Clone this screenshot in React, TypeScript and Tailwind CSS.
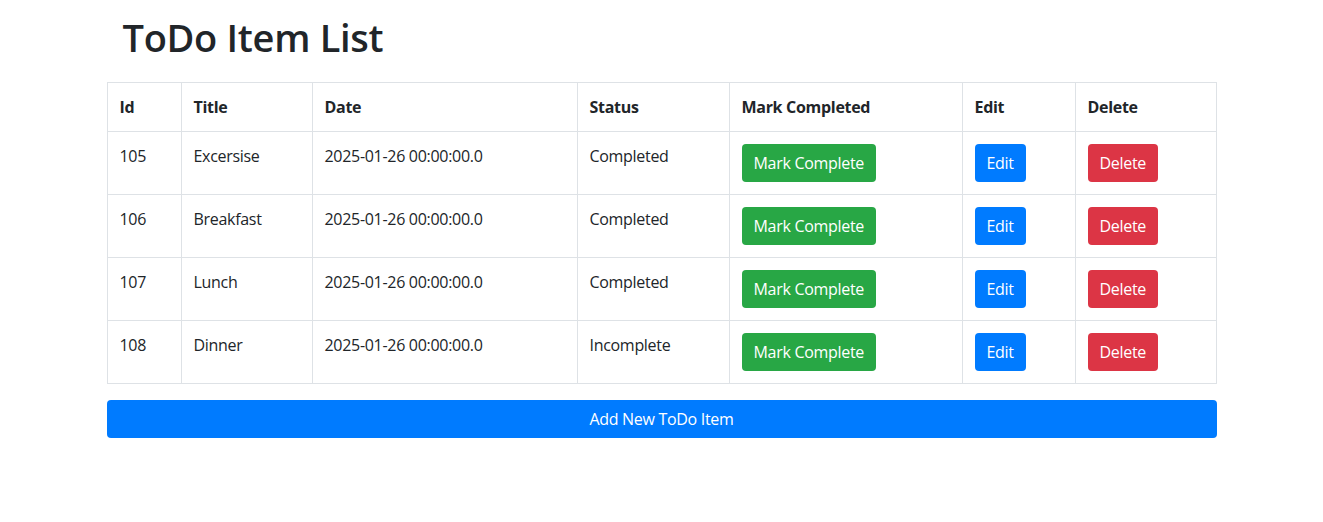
const todos = [
  { id: 105, title: "Excersise", date: "2025-01-26 00:00:00.0", status: "Completed" },
  { id: 106, title: "Breakfast", date: "2025-01-26 00:00:00.0", status: "Completed" },
  { id: 107, title: "Lunch", date: "2025-01-26 00:00:00.0", status: "Completed" },
  { id: 108, title: "Dinner", date: "2025-01-26 00:00:00.0", status: "Incomplete" },
];

const th = "border border-[#dee2e6] p-3 text-left align-top font-bold";
const td = "border border-[#dee2e6] p-3 align-top";
const btn = "h-[38px] rounded px-3 text-white leading-6";

export default function App() {
  return (
    <div
      className="min-h-[522px] bg-white text-base leading-6 tracking-[-0.3px] text-[#212529]"
      style={{ fontFamily: '"Open Sans", "Noto Sans", sans-serif' }}
    >
      <div className="mx-auto w-[1110px] pt-[13px]">
        <h1 className="pl-4 text-[38px] font-semibold leading-[48px] tracking-[-0.3px]">
          ToDo Item List
        </h1>

        <table className="mt-[21px] w-full table-fixed border-collapse">
          <colgroup>
            <col className="w-[74px]" />
            <col className="w-[131px]" />
            <col className="w-[265px]" />
            <col className="w-[152px]" />
            <col className="w-[233px]" />
            <col className="w-[113px]" />
            <col />
          </colgroup>
          <thead>
            <tr>
              <th className={th}>Id</th>
              <th className={th}>Title</th>
              <th className={th}>Date</th>
              <th className={th}>Status</th>
              <th className={th}>Mark Completed</th>
              <th className={th}>Edit</th>
              <th className={th}>Delete</th>
            </tr>
          </thead>
          <tbody>
            {todos.map((t) => (
              <tr key={t.id}>
                <td className={td}>{t.id}</td>
                <td className={td}>{t.title}</td>
                <td className={td}>{t.date}</td>
                <td className={td}>{t.status}</td>
                <td className={td}>
                  <button className={`${btn} bg-[#28a745]`}>Mark Complete</button>
                </td>
                <td className={td}>
                  <button className={`${btn} bg-[#007bff]`}>Edit</button>
                </td>
                <td className={td}>
                  <button className={`${btn} bg-[#dc3545]`}>Delete</button>
                </td>
              </tr>
            ))}
          </tbody>
        </table>

        <button className="mt-4 h-[38px] w-full rounded bg-[#007bff] text-white">
          Add New ToDo Item
        </button>
      </div>
    </div>
  );
}
